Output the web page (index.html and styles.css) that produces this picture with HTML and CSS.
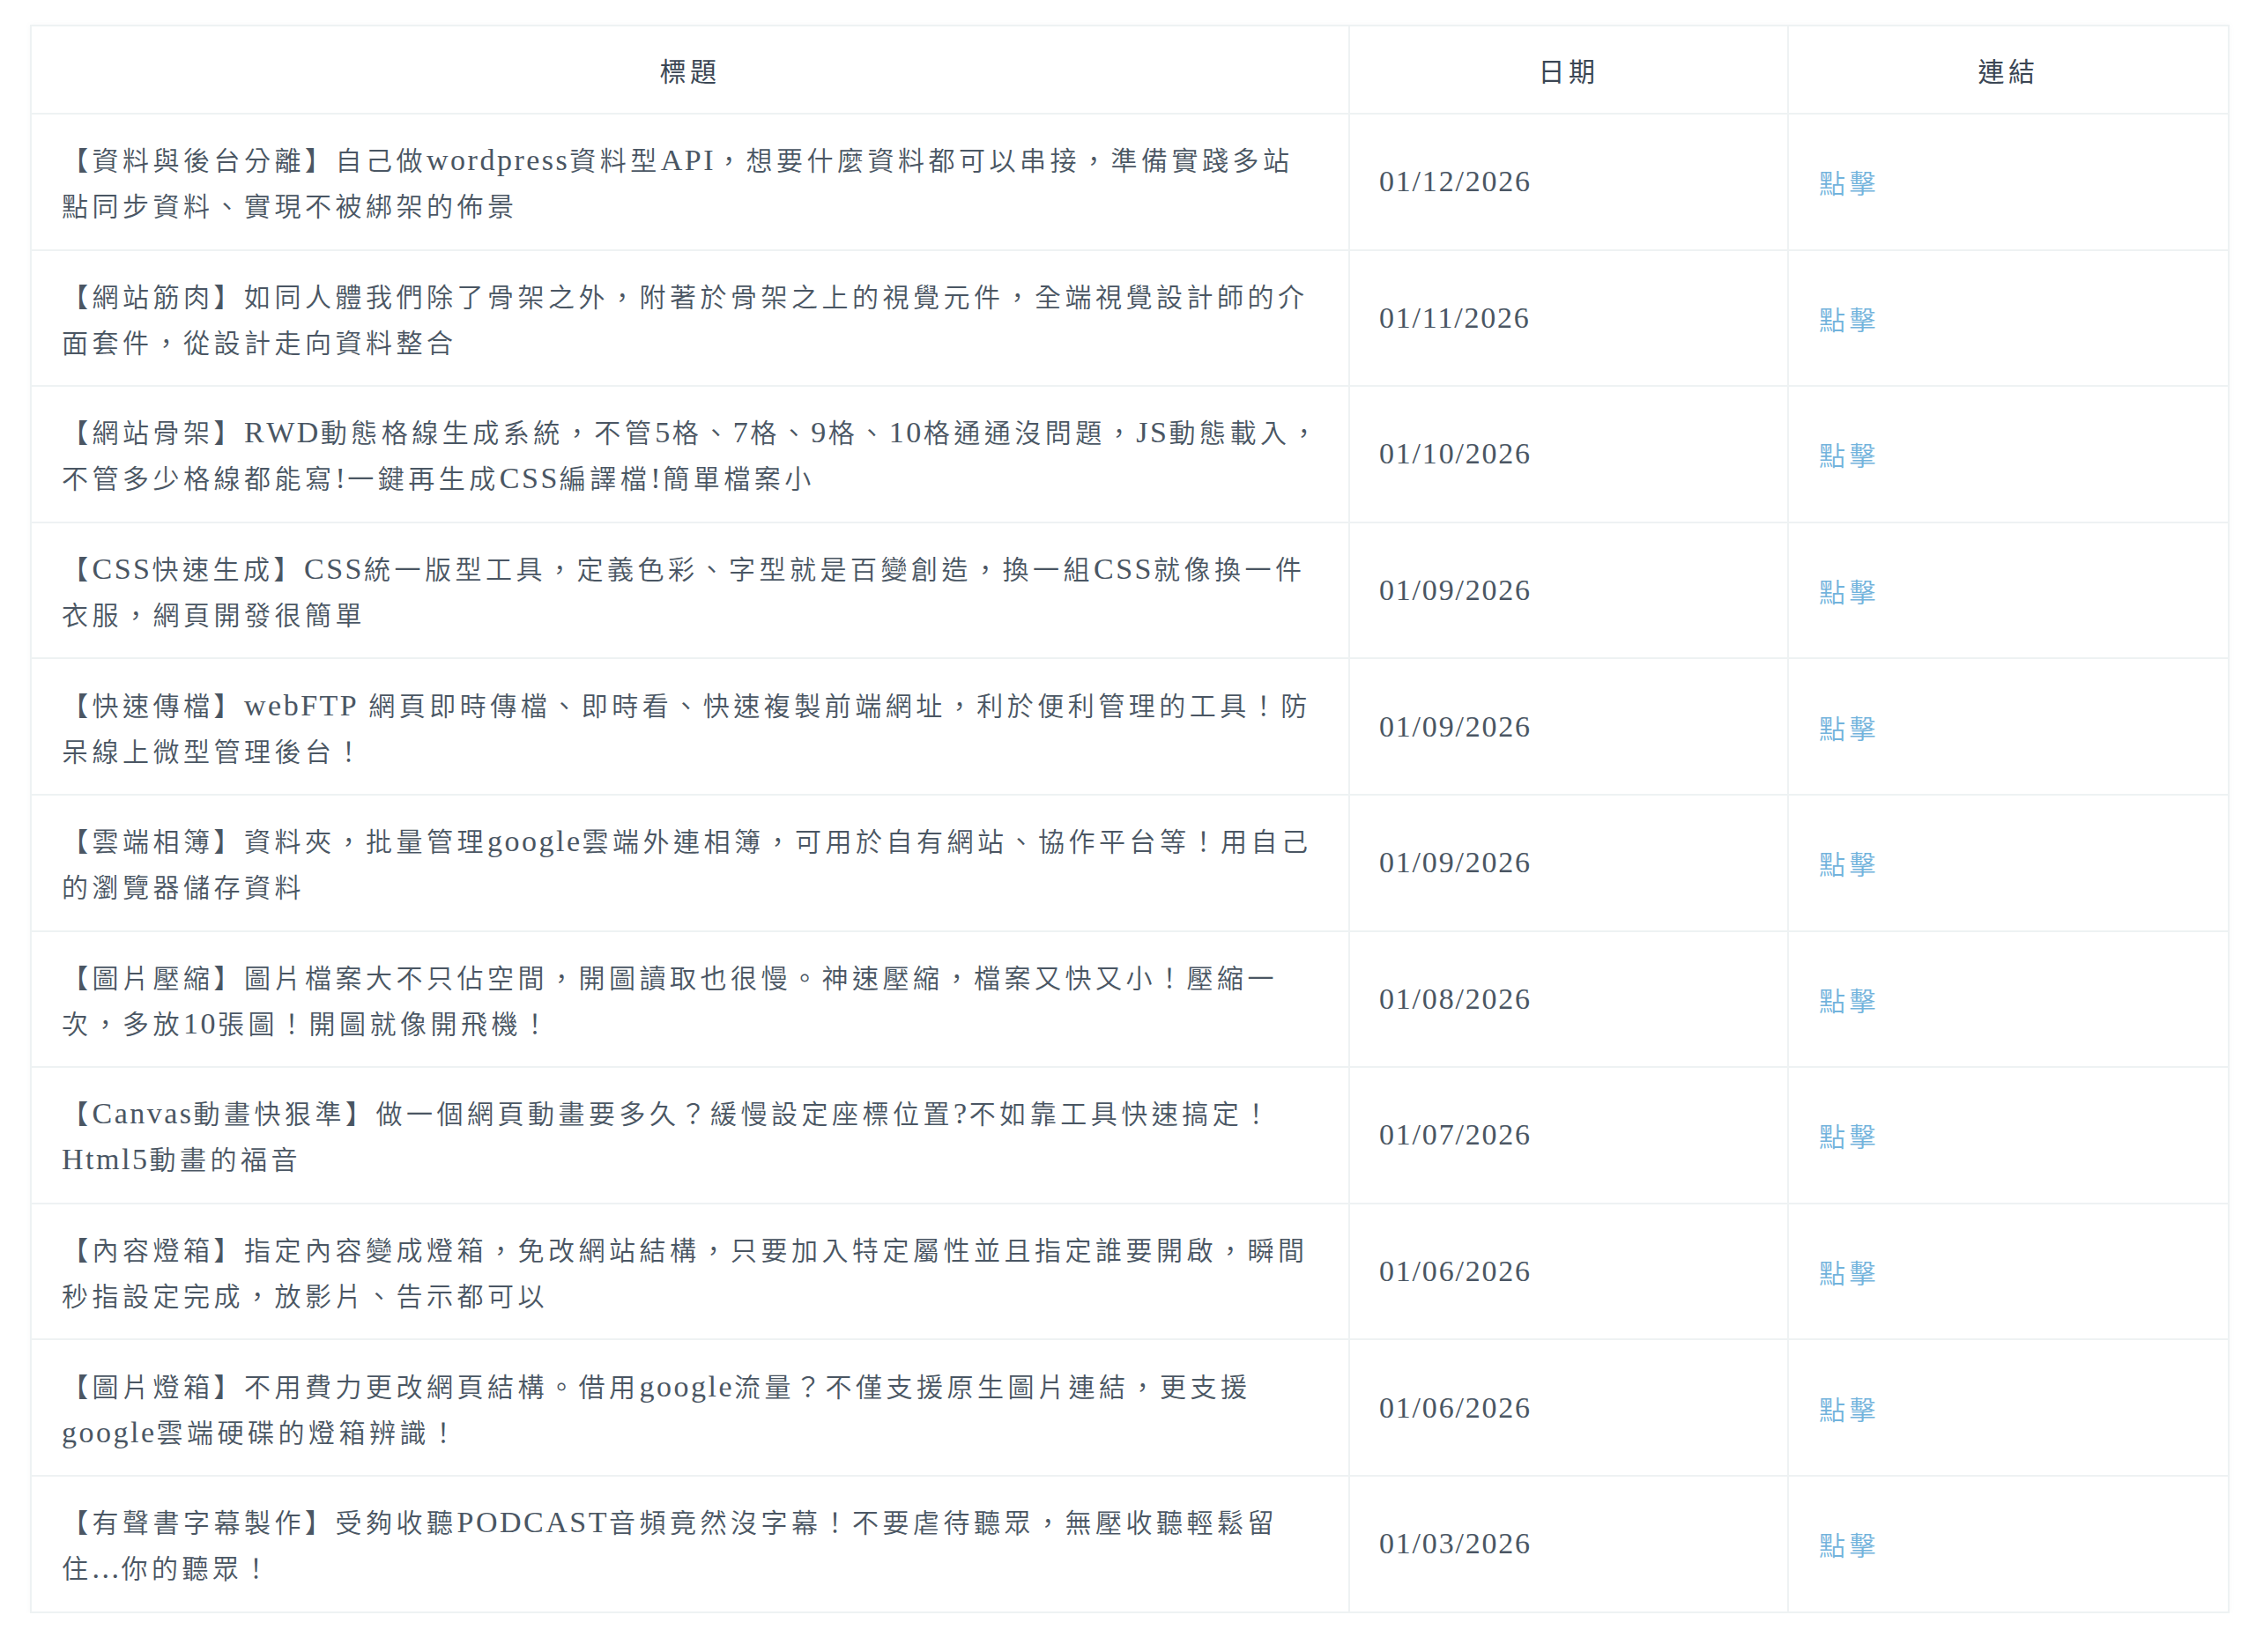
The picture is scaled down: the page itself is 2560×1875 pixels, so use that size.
FILE: index.html
```html
<!DOCTYPE html>
<html lang="zh-Hant">
<head>
<meta charset="utf-8">
<title>文章列表</title>
<link rel="stylesheet" href="styles.css">
</head>
<body>
<table class="posts">
  <colgroup>
    <col class="c-title">
    <col class="c-date">
    <col class="c-link">
  </colgroup>
  <thead>
    <tr><th>標題</th><th>日期</th><th>連結</th></tr>
  </thead>
  <tbody>
    <tr><td class="title">【資料與後台分離】自己做<span class="en">wordpress</span>資料型<span class="en">API</span>，想要什麼資料都可以串接，準備實踐多站點同步資料、實現不被綁架的佈景</td><td class="date">01/12/2026</td><td class="link"><a href="#">點擊</a></td></tr>
    <tr><td class="title">【網站筋肉】如同人體我們除了骨架之外，附著於骨架之上的視覺元件，全端視覺設計師的介面套件，從設計走向資料整合</td><td class="date">01/11/2026</td><td class="link"><a href="#">點擊</a></td></tr>
    <tr><td class="title">【網站骨架】<span class="en">RWD</span>動態格線生成系統，不管<span class="en">5</span>格、<span class="en">7</span>格、<span class="en">9</span>格、<span class="en">10</span>格通通沒問題，<span class="en">JS</span>動態載入，不管多少格線都能寫<span class="en">!</span>一鍵再生成<span class="en">CSS</span>編譯檔<span class="en">!</span>簡單檔案小</td><td class="date">01/10/2026</td><td class="link"><a href="#">點擊</a></td></tr>
    <tr><td class="title">【<span class="en">CSS</span>快速生成】<span class="en">CSS</span>統一版型工具，定義色彩、字型就是百變創造，換一組<span class="en">CSS</span>就像換一件衣服，網頁開發很簡單</td><td class="date">01/09/2026</td><td class="link"><a href="#">點擊</a></td></tr>
    <tr><td class="title">【快速傳檔】<span class="en">webFTP </span>網頁即時傳檔、即時看、快速複製前端網址，利於便利管理的工具！防呆線上微型管理後台！</td><td class="date">01/09/2026</td><td class="link"><a href="#">點擊</a></td></tr>
    <tr><td class="title">【雲端相簿】資料夾，批量管理<span class="en">google</span>雲端外連相簿，可用於自有網站、協作平台等！用自己的瀏覽器儲存資料</td><td class="date">01/09/2026</td><td class="link"><a href="#">點擊</a></td></tr>
    <tr><td class="title">【圖片壓縮】圖片檔案大不只佔空間，開圖讀取也很慢。神速壓縮，檔案又快又小！壓縮一次，多放<span class="en">10</span>張圖！開圖就像開飛機！</td><td class="date">01/08/2026</td><td class="link"><a href="#">點擊</a></td></tr>
    <tr><td class="title">【<span class="en">Canvas</span>動畫快狠準】做一個網頁動畫要多久？緩慢設定座標位置<span class="en">?</span>不如靠工具快速搞定！<span class="en">Html5</span>動畫的福音</td><td class="date">01/07/2026</td><td class="link"><a href="#">點擊</a></td></tr>
    <tr><td class="title">【內容燈箱】指定內容變成燈箱，免改網站結構，只要加入特定屬性並且指定誰要開啟，瞬間秒指設定完成，放影片、告示都可以</td><td class="date">01/06/2026</td><td class="link"><a href="#">點擊</a></td></tr>
    <tr><td class="title">【圖片燈箱】不用費力更改網頁結構。借用<span class="en">google</span>流量？不僅支援原生圖片連結，更支援<span class="en">google</span>雲端硬碟的燈箱辨識！</td><td class="date">01/06/2026</td><td class="link"><a href="#">點擊</a></td></tr>
    <tr><td class="title">【有聲書字幕製作】受夠收聽<span class="en">PODCAST</span>音頻竟然沒字幕！不要虐待聽眾，無壓收聽輕鬆留住<span class="en">...</span>你的聽眾！</td><td class="date">01/03/2026</td><td class="link"><a href="#">點擊</a></td></tr>
  </tbody>
</table>
</body>
</html>
```

FILE: styles.css
```css
html, body {
  margin: 0;
  background: #ffffff;
}

body {
  padding: 28px 0 0 34px;
}

.posts {
  border-collapse: collapse;
  table-layout: fixed;
  width: 2494px;
  font-family: "Noto Sans CJK TC", "Liberation Serif", sans-serif;
  font-size: 30px;
  font-weight: 350;
  letter-spacing: 4.5px;
  line-height: 52px;
  color: #4a5663;
  text-spacing-trim: space-all;
  box-shadow: 0 0 6px rgba(120, 140, 150, 0.06);
}

.c-title { width: 1496px; }
.c-date { width: 498px; }
.c-link { width: 500px; }

.posts th,
.posts td {
  border: 2px solid #eef2f3;
}

.posts th {
  padding: 23px 0;
  font-weight: 400;
  color: #3b4654;
  text-align: center;
}

.posts td {
  padding: 24.3px 29.5px 24.3px 34px;
  vertical-align: middle;
  text-align: left;
}

.posts .en {
  font-family: "Liberation Serif", serif;
  font-size: 34px;
  font-weight: 400;
  letter-spacing: 2.5px;
  line-height: 30px;
  font-kerning: none;
}

.posts td.date {
  padding-left: 33px;
  font-family: "Liberation Serif", serif;
  font-size: 34px;
  font-weight: 400;
  letter-spacing: 1.8px;
}

.posts td.link a {
  color: #72b3dc;
  text-decoration: none;
}
```
